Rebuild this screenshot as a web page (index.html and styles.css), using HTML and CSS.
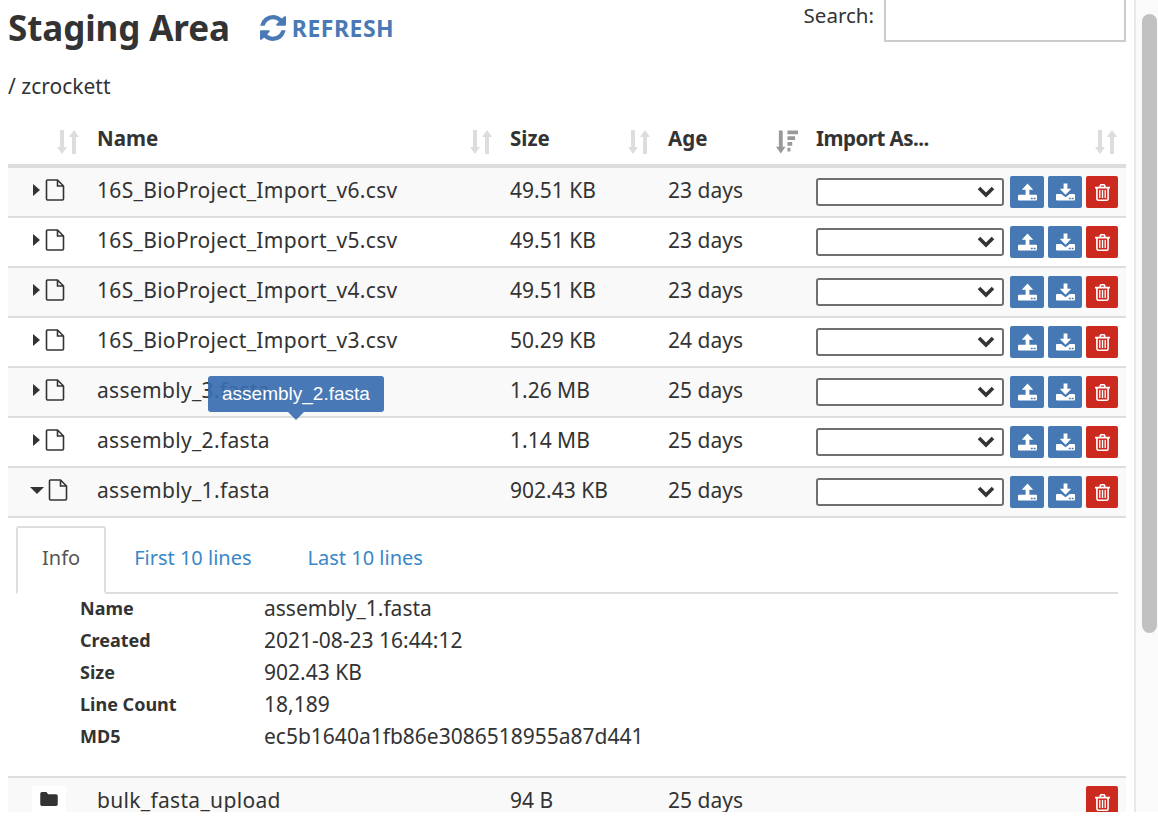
FILE: index.html
```html
<!DOCTYPE html>
<html lang="en">

<head>
    <meta charset="UTF-8">
    <meta name="viewport" content="width=device-width, initial-scale=1.0">
    <title>Staging Area</title>
    <link rel="stylesheet" href="styles.css">
</head>

<body>
    <svg class="icon-defs" xmlns="http://www.w3.org/2000/svg">
        <symbol id="i-refresh" viewBox="128 128 1536 1536">
            <path d="M1639 1056q0 5-1 7-64 268-268 434.5t-478 166.5q-146 0-282.5-55t-243.5-157l-129 129q-19 19-45 19t-45-19-19-45v-448q0-26 19-45t45-19h448q26 0 45 19t19 45-19 45l-137 137q71 66 161 102t187 36q134 0 250-65t186-179q11-17 53-117 8-23 30-23h192q13 0 22.5 9.5t9.5 22.5zm25-800v448q0 26-19 45t-45 19h-448q-26 0-45-19t-19-45 19-45l138-138q-148-137-349-137-134 0-250 65t-186 179q-11 17-53 117-8 23-30 23h-199q-13 0-22.5-9.5t-9.5-22.5v-7q65-268 270-434.5t480-166.5q146 0 284 55.5t245 156.5l130-129q19-19 45-19t45 19 19 45z"/>
        </symbol>
        <symbol id="i-sort" viewBox="0 0 22 24">
            <path d="M3 0h4v17h3l-5 7-5-7h3zM15 24h4V7h3l-5-7-5 7h3z"/>
        </symbol>
        <symbol id="i-sort-desc" viewBox="0 0 23 24">
            <path d="M3 0h4v17h3l-5 7-5-7h3zM12 0h11v4H12zM12 6h8v4h-8zM12 12h5v4h-5zM12 18h3v4h-3z"/>
        </symbol>
        <symbol id="i-file" viewBox="0 0 20 22">
            <path fill="none" stroke="currentColor" stroke-width="1.6" d="M2.5 1h10l6 6v13a1 1 0 0 1-1 1h-15a1 1 0 0 1-1-1V2a1 1 0 0 1 1-1zM12.500 1v6h6"/>
        </symbol>
        <symbol id="i-up" viewBox="0 0 20 18">
            <path d="M10 0l6 6.500h-4V13H8V6.500H4z"/>
            <path d="M1 12h18a1 1 0 0 1 1 1v4a1 1 0 0 1-1 1H1a1 1 0 0 1-1-1v-4a1 1 0 0 1 1-1zM13.500 15v1.500h2V15zM16.500 15v1.500h2V15z" fill-rule="evenodd"/>
        </symbol>
        <symbol id="i-down" viewBox="0 0 20 18">
            <path d="M8 0h4v5.500h4L10 12 4 5.500h4z"/>
            <path d="M1 11h4.500l4.500 3.500 4.500-3.500H19a1 1 0 0 1 1 1v5a1 1 0 0 1-1 1H1a1 1 0 0 1-1-1v-5a1 1 0 0 1 1-1zM13.500 15v1.500h2V15zM16.500 15v1.500h2V15z" fill-rule="evenodd"/>
        </symbol>
        <symbol id="i-trash" viewBox="0 0 16 18">
            <path d="M0 2.800h4.800V1.300L6 0h4l1.200 1.300v1.500H16v1.900h-1.200V16.500L13.300 18H2.700L1.200 16.500V4.700H0zM6.500 2.800h3V1.600h-3zM2.900 4.700v11.400l.4.300h9.400l.4-.3V4.700zM4.400 6.200h1.400v8.700H4.400zM7.300 6.200h1.400v8.700H7.300zM10.200 6.200h1.400v8.700h-1.400z" fill-rule="evenodd"/>
        </symbol>
        <symbol id="i-folder" viewBox="0 0 20 16">
            <path d="M2 0h5l2 2.500h9a2 2 0 0 1 2 2V14a2 2 0 0 1-2 2H2a2 2 0 0 1-2-2V2a2 2 0 0 1 2-2z"/>
        </symbol>
    </svg>

    <div class="page">
        <div class="content">
            <div class="top-bar">
                <div class="title-wrap">
                    <h1 class="title">Staging Area</h1>
                    <a class="refresh"><svg class="refresh-icon"><use href="#i-refresh"/></svg>Refresh</a>
                </div>
                <label class="search">Search:<input class="search-input" type="text"></label>
            </div>
            <div class="path">/ zcrockett</div>

            <table class="files">
                <colgroup>
                    <col class="col-toggle">
                    <col class="col-name">
                    <col class="col-size">
                    <col class="col-age">
                    <col class="col-import">
                </colgroup>
                <thead>
                    <tr>
                        <th><svg class="sort"><use href="#i-sort"/></svg></th>
                        <th>Name<svg class="sort"><use href="#i-sort"/></svg></th>
                        <th>Size<svg class="sort"><use href="#i-sort"/></svg></th>
                        <th>Age<svg class="sort active"><use href="#i-sort-desc"/></svg></th>
                        <th class="import-head">Import As...<svg class="sort"><use href="#i-sort"/></svg></th>
                    </tr>
                </thead>
                <tbody>
                    <tr class="odd">
                        <td><div class="toggle"><span class="caret-right"></span><svg class="file-icon"><use href="#i-file"/></svg></div></td>
                        <td class="name">16S_BioProject_Import_v6.csv</td>
                        <td>49.51 KB</td>
                        <td>23 days</td>
                        <td><div class="actions"><select class="import-select"><option></option></select><button class="btn"><svg class="btn-icon"><use href="#i-up"/></svg></button><button class="btn"><svg class="btn-icon"><use href="#i-down"/></svg></button><button class="btn danger"><svg class="btn-trash"><use href="#i-trash"/></svg></button></div></td>
                    </tr>
                    <tr>
                        <td><div class="toggle"><span class="caret-right"></span><svg class="file-icon"><use href="#i-file"/></svg></div></td>
                        <td class="name">16S_BioProject_Import_v5.csv</td>
                        <td>49.51 KB</td>
                        <td>23 days</td>
                        <td><div class="actions"><select class="import-select"><option></option></select><button class="btn"><svg class="btn-icon"><use href="#i-up"/></svg></button><button class="btn"><svg class="btn-icon"><use href="#i-down"/></svg></button><button class="btn danger"><svg class="btn-trash"><use href="#i-trash"/></svg></button></div></td>
                    </tr>
                    <tr class="odd">
                        <td><div class="toggle"><span class="caret-right"></span><svg class="file-icon"><use href="#i-file"/></svg></div></td>
                        <td class="name">16S_BioProject_Import_v4.csv</td>
                        <td>49.51 KB</td>
                        <td>23 days</td>
                        <td><div class="actions"><select class="import-select"><option></option></select><button class="btn"><svg class="btn-icon"><use href="#i-up"/></svg></button><button class="btn"><svg class="btn-icon"><use href="#i-down"/></svg></button><button class="btn danger"><svg class="btn-trash"><use href="#i-trash"/></svg></button></div></td>
                    </tr>
                    <tr>
                        <td><div class="toggle"><span class="caret-right"></span><svg class="file-icon"><use href="#i-file"/></svg></div></td>
                        <td class="name">16S_BioProject_Import_v3.csv</td>
                        <td>50.29 KB</td>
                        <td>24 days</td>
                        <td><div class="actions"><select class="import-select"><option></option></select><button class="btn"><svg class="btn-icon"><use href="#i-up"/></svg></button><button class="btn"><svg class="btn-icon"><use href="#i-down"/></svg></button><button class="btn danger"><svg class="btn-trash"><use href="#i-trash"/></svg></button></div></td>
                    </tr>
                    <tr class="odd">
                        <td><div class="toggle"><span class="caret-right"></span><svg class="file-icon"><use href="#i-file"/></svg></div></td>
                        <td class="name">assembly_3.fasta</td>
                        <td>1.26 MB</td>
                        <td>25 days</td>
                        <td><div class="actions"><select class="import-select"><option></option></select><button class="btn"><svg class="btn-icon"><use href="#i-up"/></svg></button><button class="btn"><svg class="btn-icon"><use href="#i-down"/></svg></button><button class="btn danger"><svg class="btn-trash"><use href="#i-trash"/></svg></button></div></td>
                    </tr>
                    <tr>
                        <td><div class="toggle"><span class="caret-right"></span><svg class="file-icon"><use href="#i-file"/></svg></div></td>
                        <td class="name has-tip">assembly_2.fasta<span class="tooltip">assembly_2.fasta</span></td>
                        <td>1.14 MB</td>
                        <td>25 days</td>
                        <td><div class="actions"><select class="import-select"><option></option></select><button class="btn"><svg class="btn-icon"><use href="#i-up"/></svg></button><button class="btn"><svg class="btn-icon"><use href="#i-down"/></svg></button><button class="btn danger"><svg class="btn-trash"><use href="#i-trash"/></svg></button></div></td>
                    </tr>
                    <tr class="odd">
                        <td><div class="toggle open"><span class="caret-down"></span><svg class="file-icon"><use href="#i-file"/></svg></div></td>
                        <td class="name">assembly_1.fasta</td>
                        <td>902.43 KB</td>
                        <td>25 days</td>
                        <td><div class="actions"><select class="import-select"><option></option></select><button class="btn"><svg class="btn-icon"><use href="#i-up"/></svg></button><button class="btn"><svg class="btn-icon"><use href="#i-down"/></svg></button><button class="btn danger"><svg class="btn-trash"><use href="#i-trash"/></svg></button></div></td>
                    </tr>
                    <tr class="detail-row">
                        <td colspan="5">
                            <div class="tabs">
                                <a class="tab current">Info</a>
                                <a class="tab">First 10 lines</a>
                                <a class="tab">Last 10 lines</a>
                            </div>
                            <dl class="info">
                                <dt>Name</dt><dd>assembly_1.fasta</dd>
                                <dt>Created</dt><dd>2021-08-23 16:44:12</dd>
                                <dt>Size</dt><dd>902.43 KB</dd>
                                <dt>Line Count</dt><dd>18,189</dd>
                                <dt>MD5</dt><dd>ec5b1640a1fb86e3086518955a87d441</dd>
                            </dl>
                        </td>
                    </tr>
                    <tr class="odd">
                        <td><div class="folder-box"><svg class="folder-icon"><use href="#i-folder"/></svg></div></td>
                        <td class="name">bulk_fasta_upload</td>
                        <td>94 B</td>
                        <td>25 days</td>
                        <td><div class="actions"><button class="btn danger"><svg class="btn-trash"><use href="#i-trash"/></svg></button></div></td>
                    </tr>
                </tbody>
            </table>
        </div>
        <div class="scrollbar"><div class="thumb"></div></div>
    </div>
</body>

</html>
```

FILE: styles.css
```css
body {
    font-family: "Noto Sans", sans-serif;
    margin: 0;
    padding: 0;
    background-color: #fff;
    color: #333;
}

.icon-defs {
    display: none;
}

.page {
    display: flex;
    height: 812px;
    overflow: hidden;
}

.content {
    width: 1118px;
    margin-left: 8px;
    margin-right: 8px;
    flex: none;
}

.top-bar {
    display: flex;
    justify-content: space-between;
    height: 69px;
}

.title-wrap {
    display: flex;
    align-items: center;
    height: 56px;
}

.title {
    margin: 0;
    font-size: 35px;
    font-weight: 700;
    letter-spacing: -0.1px;
    line-height: 56px;
}

.refresh {
    display: flex;
    align-items: center;
    margin-left: 30px;
    color: #4a7ab5;
    font-size: 23px;
    font-weight: 700;
    letter-spacing: 0.5px;
    text-transform: uppercase;
}

.refresh-icon {
    width: 26px;
    height: 26px;
    margin-right: 6px;
    fill: #4a7ab5;
}

.search {
    display: flex;
    align-items: flex-start;
    font-size: 20.5px;
    line-height: 31px;
}

.search-input {
    width: 242px;
    height: 51px;
    box-sizing: border-box;
    margin: -9px 0 0 10px;
    border: 2px solid #ccc;
    background: #fff;
}

.path {
    font-size: 21px;
    line-height: 34px;
}

.files {
    width: 1118px;
    margin-top: 12px;
    table-layout: fixed;
    border-collapse: separate;
    border-spacing: 0;
    font-size: 21px;
}

.col-toggle {
    width: 80px;
}

.col-name {
    width: 413px;
}

.col-size {
    width: 158px;
}

.col-age {
    width: 148px;
}

.col-import {
    width: 319px;
}

.files th {
    position: relative;
    height: 45px;
    padding: 0 9px 4px;
    border-bottom: 4px solid #ddd;
    text-align: left;
    font-size: 20.5px;
    font-weight: 700;
}

.files .import-head {
    letter-spacing: -0.5px;
}

.sort {
    position: absolute;
    right: 9px;
    top: 15px;
    width: 22px;
    height: 24px;
    fill: #ddd;
}

.sort.active {
    fill: #999;
}

.files td {
    height: 44px;
    padding: 0 9px 4px;
    border-bottom: 2px solid #ddd;
}

.files .name {
    letter-spacing: 0.32px;
}

.odd td {
    background-color: #f9f9f9;
}

.toggle {
    display: flex;
    align-items: center;
    padding-left: 16px;
}

.toggle.open {
    padding-left: 13px;
}

.caret-right {
    width: 0;
    height: 0;
    margin-right: 5px;
    border-top: 6px solid transparent;
    border-bottom: 6px solid transparent;
    border-left: 7px solid #333;
}

.caret-down {
    width: 0;
    height: 0;
    margin-right: 4px;
    border-left: 7px solid transparent;
    border-right: 7px solid transparent;
    border-top: 7px solid #333;
}

.file-icon {
    width: 20px;
    height: 22px;
    color: #333;
}

.folder-box {
    display: flex;
    align-items: center;
    justify-content: center;
    box-sizing: border-box;
    width: 34px;
    height: 32px;
    margin: 0 0 -4px 15px;
    padding-bottom: 6px;
    background-color: #fff;
}

.folder-icon {
    width: 18px;
    height: 14px;
    fill: #333;
}

.actions {
    display: flex;
    align-items: center;
    justify-content: flex-end;
    margin: 0 -1px -4px 0;
}

.import-select {
    appearance: none;
    width: 188px;
    height: 28px;
    margin-right: 6px;
    border: 2px solid #6f6f6f;
    border-radius: 3px;
    background: #fff url("data:image/svg+xml,%3Csvg xmlns='http://www.w3.org/2000/svg' width='18' height='12' viewBox='0 0 18 12'%3E%3Cpath d='M2 2l7 7 7-7' fill='none' stroke='%23333' stroke-width='3.6'/%3E%3C/svg%3E") no-repeat right 7px center;
    flex: none;
}

.btn {
    display: flex;
    align-items: center;
    justify-content: center;
    width: 34px;
    height: 32px;
    padding: 0;
    margin-right: 4px;
    border: none;
    border-radius: 2px;
    background-color: #4679b4;
}

.btn:last-child {
    width: 32px;
    margin-right: 0;
}

.btn.danger {
    background-color: #cd2a1f;
}

.btn-icon {
    width: 19px;
    height: 18px;
    fill: #fff;
}

.btn-trash {
    width: 15px;
    height: 17px;
    fill: #fff;
}

.has-tip {
    position: relative;
}

.tooltip {
    position: absolute;
    left: 120px;
    top: -42px;
    padding: 0 14px;
    height: 36px;
    line-height: 36px;
    border-radius: 3px;
    background-color: rgba(56, 108, 175, 0.92);
    color: #fff;
    font-family: "Liberation Sans", sans-serif;
    font-size: 19px;
    letter-spacing: 0;
}

.tooltip::after {
    content: "";
    position: absolute;
    left: 50%;
    top: 36px;
    margin-left: -8px;
    border-left: 8px solid transparent;
    border-right: 8px solid transparent;
    border-top: 8px solid rgba(56, 108, 175, 0.92);
}

.files .detail-row td {
    height: 260px;
    padding: 8px 8px 0;
    vertical-align: top;
    box-sizing: border-box;
}

.tabs {
    display: flex;
    height: 68px;
    box-sizing: border-box;
    border-bottom: 2px solid #ddd;
    font-size: 20px;
}

.tab {
    height: 68px;
    box-sizing: border-box;
    padding: 0 28px;
    line-height: 64px;
    color: #3a87c8;
}

.tab.current {
    padding: 0 24px;
    border: 2px solid #ddd;
    border-bottom-color: #fff;
    border-radius: 3px 3px 0 0;
    line-height: 60px;
    color: #555;
}

.info {
    display: grid;
    grid-template-columns: 184px 1fr;
    grid-auto-rows: 32px;
    margin: -1px 0 0 64px;
    font-size: 21px;
    line-height: 30px;
}

.info dt {
    font-size: 18px;
    font-weight: 700;
}

.info dd {
    margin: 0;
}

.scrollbar {
    flex: 1;
    box-sizing: border-box;
    padding: 14px 1px 0 6px;
    border-left: 2px solid #e8e8e8;
    background-color: #fafafa;
}

.thumb {
    height: 619px;
    border-radius: 8px;
    background-color: #c1c1c1;
}
```
